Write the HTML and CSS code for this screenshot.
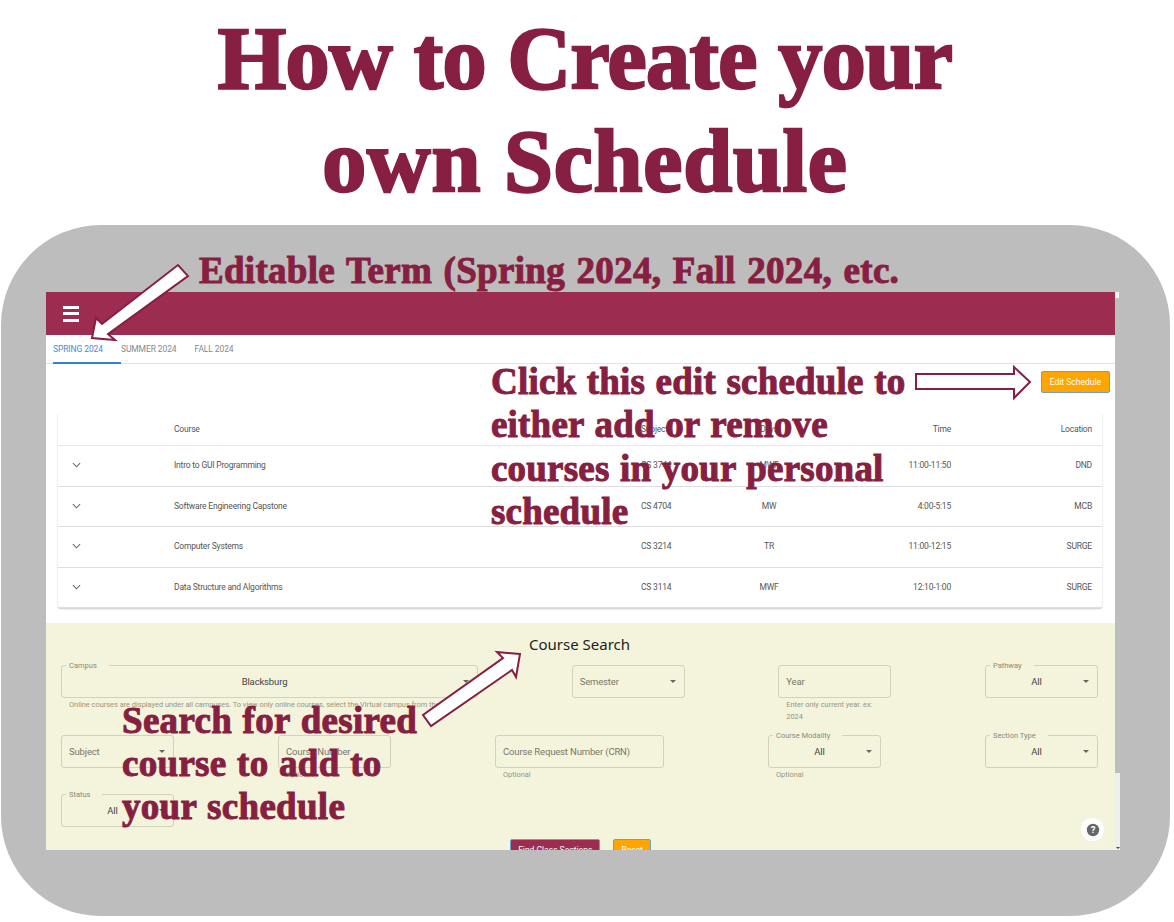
FILE: index.html
```html
<!DOCTYPE html>
<html lang="en">
<head>
  <meta charset="UTF-8" />
  <title>How to Create your own Schedule</title>
  <meta name="viewport" content="width=device-width, initial-scale=1" />
  <link rel="stylesheet" href="styles.css">
</head>
<body>
  <div class="slide">
    <h1 class="slide-title"><span class="line-one">How to Create your</span><br /><span class="line-two">own Schedule</span></h1>

    <div class="frame">
      <div class="app">
        <div class="appbar">
          <div class="menu-icon"><span></span><span></span><span></span></div>
        </div>

        <div class="tabs">
          <div class="tab active">Spring 2024</div>
          <div class="tab">Summer 2024</div>
          <div class="tab">Fall 2024</div>
        </div>

        <div class="actions">
          <button class="btn btn-orange" type="button">Edit Schedule</button>
        </div>

        <div class="card">
          <div class="row row-head">
            <div></div>
            <div>Course</div>
            <div>Subject</div>
            <div class="center">Days</div>
            <div class="right">Time</div>
            <div class="right">Location</div>
          </div>
          <div class="row">
            <div class="chev"><svg viewBox="0 0 10 6" width="9" height="6"><path d="M1 1l4 4 4-4" /></svg></div>
            <div>Intro to GUI Programming</div>
            <div>CS 3744</div>
            <div class="center">MWF</div>
            <div class="right">11:00-11:50</div>
            <div class="right">DND</div>
          </div>
          <div class="row">
            <div class="chev"><svg viewBox="0 0 10 6" width="9" height="6"><path d="M1 1l4 4 4-4" /></svg></div>
            <div>Software Engineering Capstone</div>
            <div>CS 4704</div>
            <div class="center">MW</div>
            <div class="right">4:00-5:15</div>
            <div class="right">MCB</div>
          </div>
          <div class="row">
            <div class="chev"><svg viewBox="0 0 10 6" width="9" height="6"><path d="M1 1l4 4 4-4" /></svg></div>
            <div>Computer Systems</div>
            <div>CS 3214</div>
            <div class="center">TR</div>
            <div class="right">11:00-12:15</div>
            <div class="right">SURGE</div>
          </div>
          <div class="row">
            <div class="chev"><svg viewBox="0 0 10 6" width="9" height="6"><path d="M1 1l4 4 4-4" /></svg></div>
            <div>Data Structure and Algorithms</div>
            <div>CS 3114</div>
            <div class="center">MWF</div>
            <div class="right">12:10-1:00</div>
            <div class="right">SURGE</div>
          </div>
        </div>

        <div class="search">
          <h3 class="search-title">Course Search</h3>

          <div class="field-row row-one">
            <div class="field w-campus">
              <div class="box"><label>Campus</label><span class="value">Blacksburg</span><i class="caret"></i></div>
              <p class="hint">Online courses are displayed under all campuses. To view only online courses, select the Virtual campus from the form.</p>
            </div>
            <div class="field">
              <div class="box"><span class="placeholder">Semester</span><i class="caret"></i></div>
            </div>
            <div class="field">
              <div class="box"><span class="placeholder">Year</span></div>
              <p class="hint">Enter only current year. ex: 2024</p>
            </div>
            <div class="field">
              <div class="box"><label>Pathway</label><span class="value">All</span><i class="caret"></i></div>
            </div>
          </div>

          <div class="field-row row-two">
            <div class="field">
              <div class="box"><span class="placeholder">Subject</span><i class="caret"></i></div>
            </div>
            <div class="field">
              <div class="box"><span class="placeholder">Course Number</span></div>
              <p class="hint">Optional</p>
            </div>
            <div class="field w-crn">
              <div class="box"><span class="placeholder">Course Request Number (CRN)</span></div>
              <p class="hint">Optional</p>
            </div>
            <div class="field">
              <div class="box"><label>Course Modality</label><span class="value">All</span><i class="caret"></i></div>
              <p class="hint">Optional</p>
            </div>
            <div class="field">
              <div class="box"><label>Section Type</label><span class="value">All</span><i class="caret"></i></div>
            </div>
          </div>

          <div class="field-row row-three">
            <div class="field">
              <div class="box"><label>Status</label><span class="value">All</span><i class="caret"></i></div>
            </div>
          </div>

          <div class="search-buttons">
            <button class="btn btn-maroon" type="button">Find Class Sections</button>
            <button class="btn btn-orange" type="button">Reset</button>
          </div>
        </div>
      </div>
    </div>

    <!-- scrollbar leftovers from the captured window -->
    <div class="scroll-top"></div>
    <div class="scroll-strip"><i></i></div>

    <div class="help">
      <svg viewBox="0 0 14 14" width="14" height="14">
        <circle cx="7" cy="7" r="6.2" fill="#666" />
        <text x="7" y="10.2" text-anchor="middle">?</text>
      </svg>
    </div>

    <!-- annotations on top of the screenshot -->
    <svg class="arrows" viewBox="0 0 1174 922" width="1174" height="922">
      <polygon points="92,338 96,318 102,324 178,265 188,276 108,334 115,340" />
      <polygon points="916,374 1014,374 1014,367 1030,382 1014,398 1014,389 916,389" />
      <polygon points="520,654 497,652 503,658 423,715 431,726 512,670 516,677" />
    </svg>

    <div class="note note-term">Editable Term (Spring 2024, Fall 2024, etc.</div>
    <div class="note note-edit">Click this edit schedule to<br />either add or remove<br />courses in your personal<br />schedule</div>
    <div class="note note-search">Search for desired<br />course to add to<br />your schedule</div>
  </div>
</body>
</html>
```

FILE: styles.css
```css
html, body {
  margin: 0;
  padding: 0;
  background: #fff;
}
.slide {
  position: relative;
  width: 1174px;
  height: 922px;
  overflow: hidden;
  font-family: Roboto, Arial, sans-serif;
}
.slide-title {
  margin: 0;
  height: 225px;
  padding: 7px 4px 0 0;
  box-sizing: border-box;
  text-align: center;
  font-family: "Liberation Serif", serif;
  font-size: 88px;
  line-height: 103px;
  font-weight: bold;
  color: #861f41;
  -webkit-text-stroke: 2.5px #861f41;
}
.line-one {
  letter-spacing: -0.5px;
}
.line-two {
  letter-spacing: 0.8px;
}

.frame {
  width: 1169px;
  height: 691px;
  margin-left: 1px;
  padding: 67px 0 0 45px;
  box-sizing: border-box;
  background: #bdbdbd;
  border-radius: 100px;
}
.app {
  width: 1069px;
  height: 558px;
  overflow: hidden;
  background: #fff;
  color: #555;
  font-size: 8.5px;
  letter-spacing: -0.2px;
}

.appbar {
  height: 43px;
  background: #9c2c50;
  display: flex;
  align-items: center;
  padding-left: 17px;
}
.menu-icon {
  width: 16px;
  display: flex;
  flex-direction: column;
  gap: 3.5px;
}
.menu-icon span {
  display: block;
  height: 3px;
  background: #fff;
}

.tabs {
  height: 29px;
  display: flex;
  padding-left: 7px;
  box-sizing: border-box;
  border-bottom: 1px solid #e2e2e2;
}
.tab {
  padding: 9px 18px 0 0;
  text-transform: uppercase;
  color: #888;
  letter-spacing: -0.1px;
  margin-bottom: -1px;
}
.tab.active {
  color: #4a86d8;
  border-bottom: 2px solid #2f80d8;
}

.actions {
  height: 48px;
  display: flex;
  justify-content: flex-end;
  align-items: flex-start;
  padding: 7px 5px 0 0;
  box-sizing: border-box;
}
.actions .btn {
  padding: 0 8px;
}
.btn {
  height: 22px;
  padding: 0 7px;
  border: 1px solid #6aa0d8;
  border-radius: 2px;
  font-family: Roboto, Arial, sans-serif;
  font-size: 8.5px;
  color: #fff;
}
.btn-orange {
  background: #ffa500;
}
.btn-maroon {
  background: #9c2c50;
}

.card {
  width: 1044px;
  margin-left: 12px;
  background: #fff;
  box-shadow: 0 1px 2px rgba(0, 0, 0, 0.22);
  border-radius: 2px;
}
.row {
  display: grid;
  grid-template-columns: 116px 467px 60px 136px 114px 141px;
  padding: 0 10px 1px 0;
  height: 40.5px;
  box-sizing: border-box;
  align-items: center;
  border-bottom: 1.5px solid #dedede;
}
.row-head {
  height: 34px;
  padding-bottom: 0;
  border-bottom: 1px solid #e8e8e8;
}
.center {
  text-align: center;
}
.right {
  text-align: right;
}
.chev {
  padding-left: 14px;
  line-height: 0;
}
.chev path {
  fill: none;
  stroke: #666;
  stroke-width: 1.2;
}

.search {
  height: 227px;
  margin-top: 15px;
  padding: 11px 17px 0 15px;
  box-sizing: border-box;
  background: #f4f4dc;
}
.search-title {
  margin: 0 0 10px;
  text-align: center;
  font-family: "Noto Sans", "Open Sans", sans-serif;
  font-size: 15px;
  line-height: 21px;
  font-weight: normal;
  letter-spacing: 0;
  color: #222;
}
.field-row {
  display: flex;
  justify-content: space-between;
}
.row-one {
  height: 70px;
}
.row-two {
  height: 59px;
}
.row-three {
  height: 45px;
}
.field {
  width: 113px;
}
.w-campus {
  width: 417px;
}
.w-crn {
  width: 169px;
}
.box {
  position: relative;
  height: 33px;
  display: flex;
  align-items: center;
  padding: 0 8px 0 7px;
  box-sizing: border-box;
  border: 1px solid #d2d2b8;
  border-radius: 3px;
  font-size: 9.5px;
  letter-spacing: -0.15px;
}
.box label {
  position: absolute;
  top: -5px;
  left: 4px;
  padding: 0 12px 0 3px;
  font-size: 7.5px;
  line-height: 9px;
  letter-spacing: 0;
  color: #8a8a78;
  background: #f4f4dc;
}
.value {
  flex: 1;
  text-align: center;
  color: #444;
}
.placeholder {
  flex: 1;
  color: #77776a;
}
.caret {
  width: 0;
  height: 0;
  margin-left: 3px;
  border-left: 3px solid transparent;
  border-right: 3px solid transparent;
  border-top: 3px solid #666;
}
.hint {
  margin: 1px 0 0;
  padding: 0 8px;
  font-size: 7.4px;
  line-height: 12px;
  letter-spacing: 0;
  color: #949482;
}
.search-buttons {
  display: flex;
  justify-content: center;
  gap: 13px;
  padding-left: 2px;
}

.help {
  position: absolute;
  left: 1081px;
  top: 818px;
  width: 23px;
  height: 23px;
  border-radius: 50%;
  background: #fff;
  display: flex;
  align-items: center;
  justify-content: center;
}
.help text {
  font-family: Roboto, Arial, sans-serif;
  font-size: 9.5px;
  font-weight: bold;
  fill: #fff;
}
.scroll-top {
  position: absolute;
  left: 1115px;
  top: 292px;
  width: 4px;
  height: 6px;
  background: #f4f4f4;
}
.scroll-strip {
  position: absolute;
  left: 1115px;
  top: 773px;
  width: 5px;
  height: 77px;
  background: #efefef;
}
.scroll-strip i {
  position: absolute;
  right: 0;
  bottom: 1px;
  border-left: 2px solid transparent;
  border-right: 2px solid transparent;
  border-top: 2px solid #444;
}

.arrows {
  position: absolute;
  left: 0;
  top: 0;
}
.arrows polygon {
  fill: #fff;
  stroke: #861f41;
  stroke-width: 2;
  stroke-linejoin: miter;
}
.note {
  position: absolute;
  font-family: "Liberation Serif", serif;
  font-size: 37px;
  line-height: 43px;
  font-weight: bold;
  color: #861f41;
  -webkit-text-stroke: 1px #861f41;
  white-space: nowrap;
}
.note-term {
  left: 199px;
  top: 249px;
  letter-spacing: 0.3px;
  word-spacing: 2px;
}
.note-edit {
  left: 491px;
  top: 360px;
  line-height: 43.3px;
  letter-spacing: 0.2px;
  word-spacing: 1px;
}
.note-search {
  left: 122px;
  top: 699px;
  letter-spacing: 0.3px;
  word-spacing: 1px;
}
```
